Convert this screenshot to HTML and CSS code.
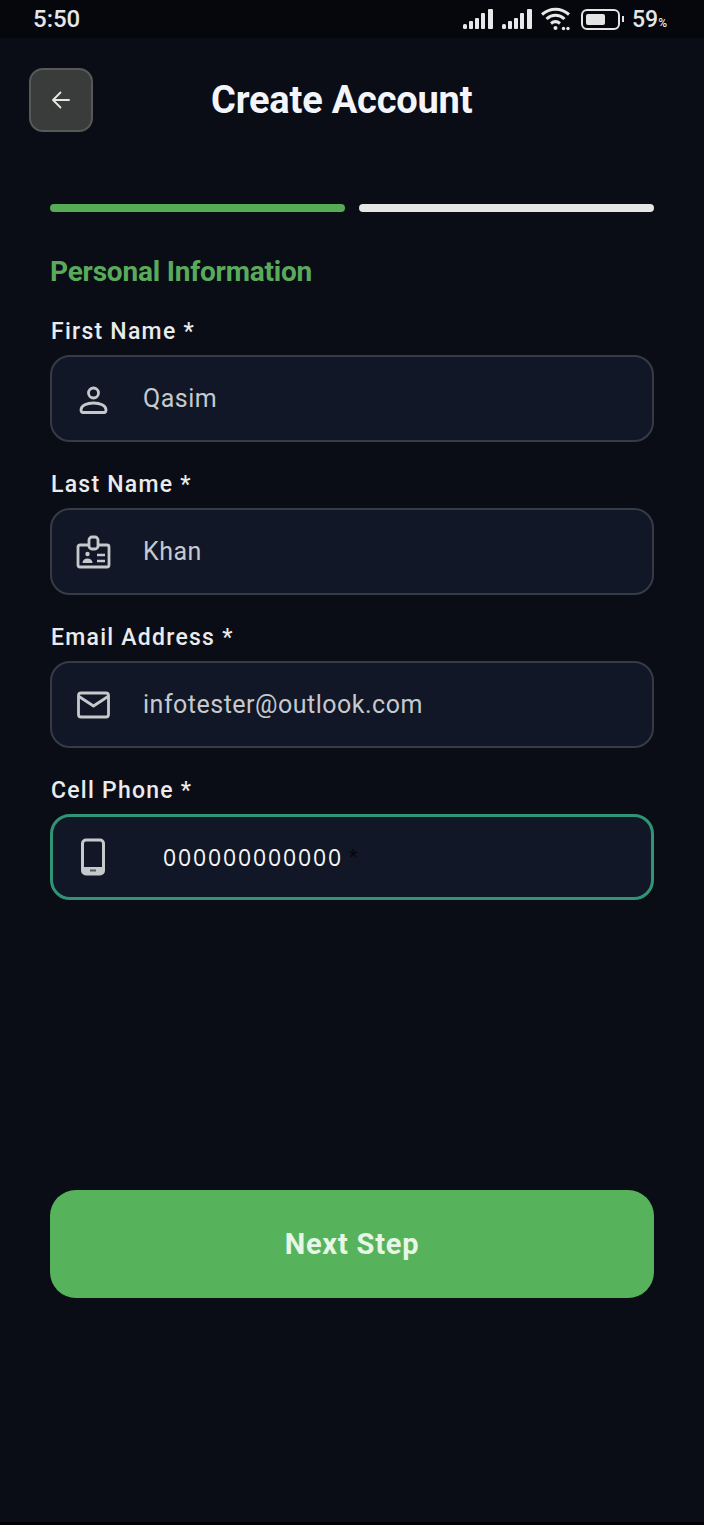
FILE: index.html
```html
<!DOCTYPE html>
<html lang="en">
<head>
  <meta charset="UTF-8">
  <meta name="viewport" content="width=device-width, initial-scale=1.0">
  <title>Create Account</title>
  <link rel="stylesheet" href="styles.css">
</head>
<body>
  <div class="status-bar">
    <span class="time">5:50</span>
    <div class="status-icons">
      <svg class="signal" width="31" height="22" viewBox="0 0 31 22">
        <rect x="0" y="16" width="4" height="5" rx="1.500"/>
        <rect x="6" y="13" width="4" height="8" rx="1"/>
        <rect x="12" y="10" width="4" height="11" rx="1"/>
        <rect x="18" y="5" width="4" height="16" rx="1"/>
        <rect x="25" y="1" width="5" height="20" rx="1"/>
      </svg>
      <svg class="signal" width="31" height="22" viewBox="0 0 31 22">
        <rect x="0" y="16" width="4" height="5" rx="1.500"/>
        <rect x="6" y="13" width="4" height="8" rx="1"/>
        <rect x="12" y="10" width="4" height="11" rx="1"/>
        <rect x="18" y="5" width="4" height="16" rx="1"/>
        <rect x="25" y="1" width="5" height="20" rx="1"/>
      </svg>
      <svg class="wifi" width="30" height="24" viewBox="0 0 30 24" fill="none" stroke="#e8e8e8" stroke-width="3">
        <path d="M1 7.500 C9 0.500 20 0.500 28 7.500"/>
        <path d="M5.500 12 C11 7 18 7 23.500 12"/>
        <path d="M10 16.500 C13 14 16 14 19 16.500"/>
        <circle cx="14.500" cy="21" r="2" fill="#e8e8e8" stroke="none"/>
        <circle cx="22.500" cy="21.500" r="1.700" fill="#e8e8e8" stroke="none"/>
        <circle cx="27" cy="21.500" r="1.700" fill="#e8e8e8" stroke="none"/>
      </svg>
      <div class="battery">
        <div class="battery-body"><div class="battery-fill"></div></div>
        <div class="battery-tip"></div>
      </div>
      <span class="percent">59<small>%</small></span>
    </div>
  </div>

  <div class="header">
    <button class="back-btn" type="button" aria-label="Back">
      <svg width="24" height="24" viewBox="0 0 24 24" fill="none" stroke="#e6e6e2" stroke-width="1.800" stroke-linecap="round" stroke-linejoin="round">
        <path d="M20 12H4.500M11.500 4.500L4 12l7.500 7.500"/>
      </svg>
    </button>
    <h1>Create Account</h1>
  </div>

  <div class="container">
    <div class="steps">
      <div class="step done"></div>
      <div class="step"></div>
    </div>

    <h2>Personal Information</h2>

    <form class="form">
      <div class="field">
        <label>First Name *</label>
        <div class="input-box">
          <svg class="icon" width="40" height="40" viewBox="0 0 40 40" fill="none" stroke="#c6c9cc" stroke-width="2.800">
            <circle cx="19.500" cy="14" r="5"/>
            <path d="M7 31c0-4.500 6-7 12.500-7s12.500 2.500 12.500 7c0 1.500-.8 2.500-2 2.500H9c-1.200 0-2-1-2-2.500z"/>
          </svg>
          <span class="value">Qasim</span>
        </div>
      </div>

      <div class="field">
        <label>Last Name *</label>
        <div class="input-box">
          <svg class="icon" width="40" height="40" viewBox="0 0 40 40" fill="none" stroke="#c6c9cc" stroke-width="2.800" stroke-linejoin="round">
            <path d="M15 13H6a2 2 0 0 0-2 2v18a2 2 0 0 0 2 2h27a2 2 0 0 0 2-2V15a2 2 0 0 0-2-2h-9"/>
            <rect x="15" y="5" width="9" height="12" rx="3"/>
            <circle cx="13.500" cy="22" r="2.200" fill="#c6c9cc" stroke="none"/>
            <path d="M8.500 31c0-3 2-4.500 5-4.500s5 1.500 5 4.500z" fill="#c6c9cc" stroke="none"/>
            <path d="M23 23h8M23 29h8" stroke-width="2.400"/>
          </svg>
          <span class="value">Khan</span>
        </div>
      </div>

      <div class="field">
        <label>Email Address *</label>
        <div class="input-box">
          <svg class="icon" width="40" height="40" viewBox="0 0 40 40" fill="none" stroke="#c6c9cc" stroke-width="2.800" stroke-linejoin="round">
            <rect x="4.500" y="8" width="30" height="24" rx="2.500"/>
            <path d="M5 11.500L19.500 21 34 11.500"/>
          </svg>
          <span class="value">infotester@outlook.com</span>
        </div>
      </div>

      <div class="field">
        <label>Cell Phone *</label>
        <div class="input-box active">
          <svg class="icon" width="40" height="40" viewBox="0 0 40 40" fill="none">
            <rect x="7.500" y="3" width="21" height="34" rx="3.500" stroke="#c6c9cc" stroke-width="3"/>
            <rect x="8" y="30" width="20" height="7" fill="#c6c9cc"/>
            <rect x="15" y="32.500" width="6" height="2" fill="#555a60"/>
          </svg>
          <span class="value phone">000000000000</span>
          <span class="hint">*</span>
        </div>
      </div>
    </form>

    <button class="next-btn" type="button">Next Step</button>
  </div>
</body>
</html>
```

FILE: styles.css
```css
* {
  box-sizing: border-box;
}

body {
  margin: 0;
  height: 1525px;
  overflow: hidden;
  font-family: Roboto, "Liberation Sans", sans-serif;
  background-color: #0a0d15;
  border-bottom: 3px solid #000;
  color: #fff;
}

.status-bar {
  height: 38px;
  padding: 0 37px 0 33px;
  background-color: #05070c;
  display: flex;
  align-items: center;
  justify-content: space-between;
}

.time {
  font-size: 24px;
  font-weight: 500;
  color: #e4e6e8;
}

.status-icons {
  display: flex;
  align-items: center;
  gap: 8px;
}

.signal {
  fill: #e8e8e8;
}

.battery {
  display: flex;
  align-items: center;
  margin-left: 2px;
}

.battery-body {
  width: 39px;
  height: 21px;
  padding: 3px;
  border: 2px solid #e4e4e4;
  border-radius: 6px;
}

.battery-fill {
  width: 64%;
  height: 100%;
  background-color: #e4e4e4;
  border-radius: 2px;
}

.battery-tip {
  width: 2px;
  height: 6px;
  margin-left: 2px;
  background-color: #e4e4e4;
}

.percent {
  font-size: 23px;
  font-weight: 500;
  color: #e4e6e8;
}

.percent small {
  font-size: 12px;
}

.header {
  display: flex;
  align-items: center;
  padding: 30px 0 0 29px;
}

.back-btn {
  width: 64px;
  height: 64px;
  padding: 0;
  display: flex;
  align-items: center;
  justify-content: center;
  background-color: #393c3a;
  border: 2px solid #565957;
  border-radius: 14px;
}

.header h1 {
  margin: 0 0 0 118px;
  font-size: 38px;
  font-weight: 700;
  letter-spacing: -0.2px;
  color: #f3f5fa;
}

.container {
  padding: 72px 50px 0;
}

.steps {
  display: flex;
  gap: 14px;
}

.step {
  flex: 1;
  height: 8px;
  border-radius: 4px;
  background-color: #e6e6e6;
}

.step.done {
  background-color: #56ab56;
}

h2 {
  margin: 43px 0 0;
  height: 34px;
  line-height: 34px;
  font-size: 28px;
  font-weight: 700;
  letter-spacing: -0.2px;
  color: #59ab5b;
}

.form {
  margin-top: 29px;
  display: flex;
  flex-direction: column;
  gap: 29px;
}

label {
  display: block;
  height: 28px;
  line-height: 28px;
  margin-bottom: 9px;
  padding-left: 1px;
  font-size: 23px;
  font-weight: 500;
  letter-spacing: 1.25px;
  color: #eaebec;
}

.input-box {
  height: 87px;
  padding: 0 22px;
  display: flex;
  align-items: center;
  background-color: #111726;
  border: 2px solid #363b45;
  border-radius: 20px;
}

.input-box.active {
  height: 86px;
  border: 3px solid #2f9574;
}

.icon {
  flex-shrink: 0;
}

.value {
  margin-left: 29px;
  font-size: 25px;
  letter-spacing: 0.5px;
  color: #c6c9cd;
}

.value.phone {
  margin-left: 48px;
  font-family: "Open Sans", sans-serif;
  font-size: 23px;
  letter-spacing: 1.85px;
  color: #f5f5f5;
}

.hint {
  margin-left: 6px;
  font-size: 20px;
  color: #05070c;
}

.next-btn {
  display: block;
  width: 100%;
  height: 108px;
  margin-top: 290px;
  background-color: #57b35b;
  border: none;
  border-radius: 26px;
  font-family: Roboto, "Liberation Sans", sans-serif;
  font-size: 29px;
  font-weight: 700;
  letter-spacing: 0.8px;
  color: #e6f7e6;
}
```
